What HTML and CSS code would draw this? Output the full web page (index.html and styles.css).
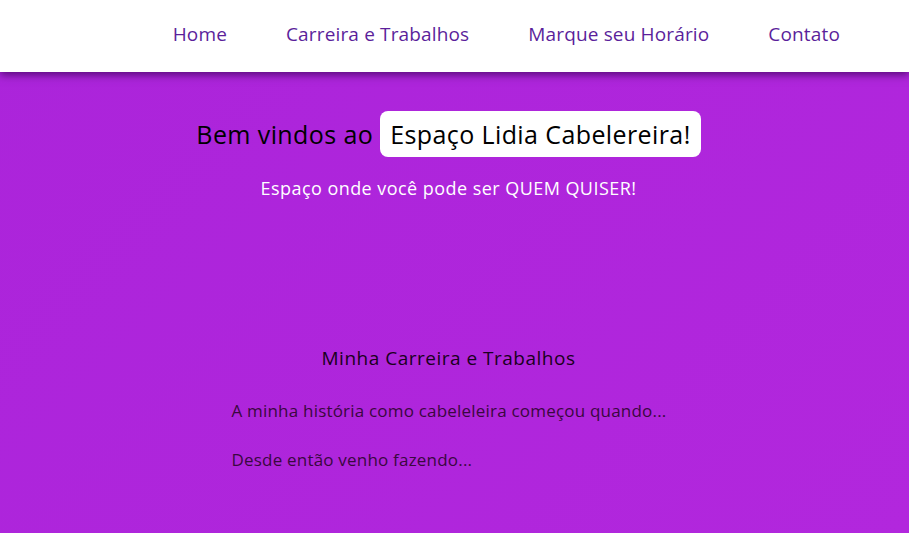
FILE: index.html
```html
<!DOCTYPE html>
<html lang="pt-BR">
<head>
<meta charset="utf-8">
<title>Espaço Lidia Cabelereira</title>
<link rel="stylesheet" href="styles.css">
</head>
<body>
<header class="topbar">
  <nav class="menu">
    <a href="#" class="menu-link">Home</a>
    <a href="#" class="menu-link">Carreira e Trabalhos</a>
    <a href="#" class="menu-link">Marque seu Horário</a>
    <a href="#" class="menu-link">Contato</a>
  </nav>
</header>
<main class="page">
  <section class="hero">
    <h1 class="hero-title">Bem vindos ao <span class="hero-badge">Espaço Lidia Cabelereira!</span></h1>
    <p class="hero-sub">Espaço onde você pode ser QUEM QUISER!</p>
  </section>
  <section class="career">
    <h2 class="career-title">Minha Carreira e Trabalhos</h2>
    <p class="career-text">A minha história como cabeleleira começou quando...</p>
    <p class="career-text">Desde então venho fazendo...</p>
  </section>
</main>
</body>
</html>
```

FILE: styles.css
```css
html, body {
  margin: 0;
  padding: 0;
}
body {
  font-family: "Open Sans", "Noto Sans", sans-serif;
  background: linear-gradient(135deg, #ab24da 0%, #b227dd 100%);
  min-height: 533px;
  overflow: hidden;
}
.topbar {
  background: #ffffff;
  height: 72px;
  box-sizing: border-box;
  padding-bottom: 4px;
  box-shadow: 0 3px 8px rgba(60, 0, 90, 0.75);
  display: flex;
  align-items: center;
  justify-content: flex-end;
  padding-right: 69px;
  position: relative;
  z-index: 1;
}
.menu {
  display: flex;
  gap: 59px;
}
.menu-link {
  color: #5b1f9b;
  text-decoration: none;
  font-size: 19px;
  letter-spacing: 0.15px;
  font-weight: 500;
}
.page {
  display: flex;
  flex-direction: column;
  align-items: center;
  padding-right: 12px;
}
.hero {
  display: flex;
  flex-direction: column;
  align-items: center;
  padding-top: 39px;
}
.hero-title {
  margin: 0;
  font-size: 25px;
  letter-spacing: 0.4px;
  font-weight: 500;
  color: #000;
  line-height: 46px;
  display: flex;
  align-items: center;
  gap: 7px;
}
.hero-badge {
  background: #fff;
  border-radius: 8px;
  padding: 0 10px;
  font-weight: 400;
  height: 46px;
  display: inline-flex;
  align-items: center;
}
.hero-sub {
  margin: 19px 0 0;
  color: #fff;
  font-size: 18px;
  letter-spacing: 0.45px;
}
.career {
  width: 434px;
  padding-top: 145px;
  display: flex;
  flex-direction: column;
}
.career-title {
  margin: 0;
  text-align: center;
  font-size: 19px;
  letter-spacing: 0.5px;
  font-weight: 500;
  color: #1a0020;
}
.career-text {
  margin: 28px 0 0;
  font-size: 17px;
  letter-spacing: 0.2px;
  color: #3a0840;
  white-space: nowrap;
}
.career-text + .career-text {
  margin-top: 26px;
}
```
